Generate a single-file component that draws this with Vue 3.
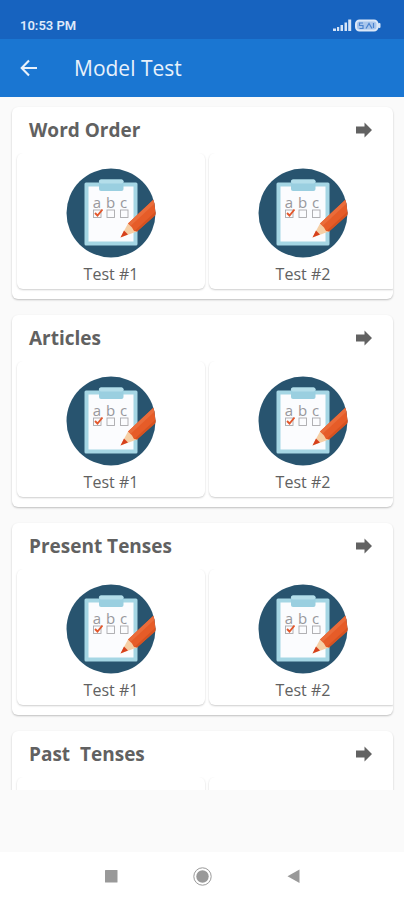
<script setup>
const sections = [
  { title: 'Word Order', tests: ['Test #1', 'Test #2'] },
  { title: 'Articles', tests: ['Test #1', 'Test #2'] },
  { title: 'Present Tenses', tests: ['Test #1', 'Test #2'] },
  { title: 'Past  Tenses', tests: ['Test #1', 'Test #2'] },
]
</script>

<template>
  <div class="screen">
    <div class="status">
      <span class="time">10:53 PM</span>
      <svg class="indicators" viewBox="0 0 50 14" aria-hidden="true">
        <g fill="#d5e4f7">
          <rect x="1" y="9.500" width="3" height="2.500" />
          <rect x="5" y="8" width="2.200" height="4" />
          <rect x="8.500" y="6" width="2.500" height="6" />
          <rect x="12.500" y="3.500" width="2.500" height="8.500" />
          <rect x="16.200" y="0.500" width="3" height="11.500" />
          <rect x="46" y="4" width="2.500" height="5" rx="1" />
        </g>
        <rect x="24" y="1.500" width="21.500" height="10" rx="3.500" fill="#a9c6ec" stroke="#dce8f8" stroke-width="2" />
        <path d="M31 4h-3.500v2.500h3.500v3h-3.500M34 9.500l3-5 3 5M41.500 4v5" fill="none" stroke="#4a83cf" stroke-width="1.200" />
      </svg>
    </div>

    <header class="appbar">
      <button class="back" type="button" aria-label="Back">
        <svg viewBox="0 0 18 18" aria-hidden="true">
          <path d="M17 9H2.500M9 1.500L1.700 9L9 16.500" fill="none" stroke="#e8f1fb" stroke-width="2.100" />
        </svg>
      </button>
      <h1>Model Test</h1>
    </header>

    <main class="list">
      <section v-for="section in sections" :key="section.title" class="card">
        <div class="card-head">
          <h2>{{ section.title }}</h2>
          <button class="more" type="button" :aria-label="section.title">
            <svg viewBox="0 0 16 16" aria-hidden="true">
              <path d="M0 4.500H8.500V0.500L16 8L8.500 15.500V11.500H0Z" fill="#626262" />
            </svg>
          </button>
        </div>
        <div class="strip">
          <button v-for="test in section.tests" :key="test" class="test" type="button">
            <svg class="picture" viewBox="0 0 90 90" aria-hidden="true">
              <defs>
                <clipPath id="disc"><circle cx="45" cy="45" r="44.500" /></clipPath>
              </defs>
              <g clip-path="url(#disc)">
                <rect width="90" height="90" fill="#28546f" />
                <rect x="18.500" y="14.500" width="53" height="63" rx="1.500" fill="#a5d6e4" />
                <rect x="22.500" y="18.500" width="45" height="55" fill="#fbfcfe" />
                <rect x="33" y="11.500" width="24.500" height="11.500" rx="2" fill="#9acfe0" />
                <rect x="33" y="11.500" width="24.500" height="4" rx="2" fill="#b4deea" />
                <g class="letters">
                  <text x="31" y="40">a</text>
                  <text x="44.500" y="40">b</text>
                  <text x="57.500" y="40">c</text>
                </g>
                <g fill="none" stroke="#a9a9ad" stroke-width="0.900">
                  <rect x="27.500" y="42" width="7.500" height="7.500" />
                  <rect x="41" y="42" width="7.500" height="7.500" />
                  <rect x="54.500" y="42" width="7.500" height="7.500" />
                </g>
                <path d="M29 45L31.500 47.500L36.500 41.500" fill="none" stroke="#e3572c" stroke-width="1.900" />
                <path d="M54.500 69.500L62 55.500L71 63.500Z" fill="#f6cfa5" />
                <path d="M54.500 69.500L58 62.500L62 66.500Z" fill="#d6401c" />
                <path d="M62 55.500L92 27.500V44.500L71 63.500L68 63L66 59.500Z" fill="#e65c28" />
                <path d="M62 55.500L92 27.500V32.500L65 57.500Z" fill="#ea6c3a" />
                <path d="M69 62.500L92 41.500V45L71 63.500Z" fill="#d65220" />
              </g>
            </svg>
            <span class="label">{{ test }}</span>
          </button>
        </div>
      </section>
    </main>

    <div class="banner"></div>

    <nav class="system">
      <button type="button" aria-label="Recent apps">
        <svg viewBox="0 0 20 20" aria-hidden="true"><rect x="4" y="4" width="12.500" height="12.500" rx="0.500" fill="#999" /></svg>
      </button>
      <button type="button" aria-label="Home">
        <svg viewBox="0 0 20 20" aria-hidden="true">
          <circle cx="10.500" cy="10.500" r="8.700" fill="none" stroke="#999" />
          <circle cx="10.500" cy="10.500" r="6.200" fill="#999" />
        </svg>
      </button>
      <button type="button" aria-label="Back">
        <svg viewBox="0 0 20 20" aria-hidden="true"><path d="M16.500 3.500V17L4.500 10.200Z" fill="#999" /></svg>
      </button>
    </nav>
  </div>
</template>

<style>
body {
  margin: 0;
  background: #fafafa;
}
</style>

<style scoped>
.screen {
  display: flex;
  flex-direction: column;
  height: 100vh;
  background: #fafafa;
  color: #616161;
  font-family: "Open Sans", "Noto Sans", sans-serif;
}

button {
  margin: 0;
  padding: 0;
  border: 0;
  background: none;
  color: inherit;
  font: inherit;
  cursor: pointer;
}

svg {
  display: block;
}

.status {
  display: flex;
  flex: none;
  align-items: center;
  justify-content: space-between;
  height: 27px;
  padding: 12px 22px 0 20px;
  background: #1763bf;
}

.time {
  color: #dfeafa;
  font: 600 13px/16px Roboto, sans-serif;
}

.indicators {
  width: 50px;
  height: 14px;
}

.appbar {
  display: flex;
  flex: none;
  align-items: center;
  gap: 36px;
  height: 58px;
  padding: 0 20px;
  background: #1a76d2;
  color: #e8f1fb;
}

.back svg {
  width: 18px;
  height: 18px;
}

h1 {
  margin: 0;
  font-size: 21px;
  font-weight: 400;
  line-height: 28px;
}

.list {
  display: flex;
  flex: 1;
  flex-direction: column;
  gap: 16px;
  min-height: 0;
  padding: 10px 11px 0 12px;
  overflow: hidden;
}

.card {
  flex: none;
  padding-bottom: 10px;
  border-radius: 6px;
  background: #fff;
  box-shadow: 0 1px 2px rgba(0, 0, 0, 0.24);
}

.card-head {
  display: flex;
  align-items: center;
  justify-content: space-between;
  height: 46px;
  padding: 0 21px 0 17px;
}

h2 {
  margin: 0;
  font-size: 19px;
  font-weight: 700;
  line-height: 24px;
  white-space: pre;
}

.more svg {
  width: 16px;
  height: 16px;
}

.strip {
  display: flex;
  gap: 4px;
  margin-bottom: -4px;
  padding: 0 0 4px 5px;
  overflow: hidden;
}

.test {
  display: flex;
  flex: none;
  flex-direction: column;
  align-items: center;
  gap: 6px;
  width: 188px;
  padding: 15px 0 4px;
  border-radius: 6px;
  background: #fff;
  box-shadow: 0 1px 2px rgba(0, 0, 0, 0.2);
}

.picture {
  width: 90px;
  height: 90px;
}

.letters {
  fill: #98989c;
  font-family: "Open Sans", sans-serif;
  font-size: 15px;
  text-anchor: middle;
}

.label {
  font-size: 16px;
  line-height: 21px;
}

.banner {
  flex: none;
  height: 62px;
}

.system {
  display: flex;
  flex: none;
  align-items: center;
  justify-content: center;
  gap: 71px;
  height: 48px;
  background: #fff;
}

.system svg {
  width: 20px;
  height: 20px;
}
</style>
